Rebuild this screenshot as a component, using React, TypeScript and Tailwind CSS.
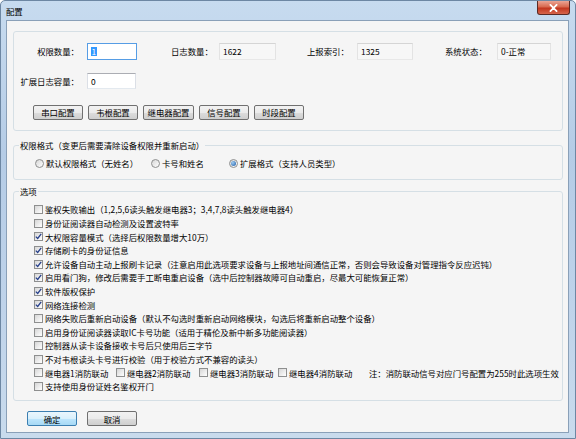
import React from "react";

const options: [string, boolean][] = [
  ["鉴权失败输出（1,2,5,6读头触发继电器3；3,4,7,8读头触发继电器4）", false],
  ["身份证阅读器自动检测及设置波特率", false],
  ["大权限容量模式（选择后权限数量增大10万）", true],
  ["存储刷卡的身份证信息", true],
  ["允许设备自动主动上报刷卡记录（注意启用此选项要求设备与上报地址间通信正常，否则会导致设备对管理指令反应迟钝）", true],
  ["启用看门狗，修改后需要手工断电重启设备（选中后控制器故障可自动重启，尽最大可能恢复正常）", true],
  ["软件版权保护", true],
  ["网络连接检测", true],
  ["网络失败后重新启动设备（默认不勾选时重新启动网络模块，勾选后将重新启动整个设备）", false],
  ["启用身份证阅读器读取IC卡号功能（适用于精伦及新中新多功能阅读器）", false],
  ["控制器从读卡设备接收卡号后只使用后三字节", false],
  ["不对韦根读头卡号进行校验（用于校验方式不兼容的读头）", false],
];

function Check({ on }: { on?: boolean }) {
  return (
    <span className="flex h-[9px] w-[9px] shrink-0 items-center justify-center border border-[#8e8f8f] bg-[linear-gradient(135deg,#d6d6d6,#ffffff)]">
      {on && (
        <svg viewBox="0 0 7 7" className="h-[7px] w-[7px]">
          <path d="M0.8 3.6 L2.7 5.5 L6.2 0.9" fill="none" stroke="#27408b" strokeWidth="1.3" />
        </svg>
      )}
    </span>
  );
}

function Radio({ on }: { on?: boolean }) {
  return (
    <span className="flex h-[9px] w-[9px] shrink-0 items-center justify-center rounded-full border border-[#8e8f8f] bg-[linear-gradient(135deg,#d6d6d6,#ffffff)]">
      {on && <span className="h-[5px] w-[5px] rounded-full bg-[radial-gradient(circle_at_35%_35%,#9ccbf2,#1d5aa5)]" />}
    </span>
  );
}

function Btn({ label, w, focus }: { label: string; w: string; focus?: boolean }) {
  return (
    <div
      className={
        focus
          ? `flex h-[15px] ${w} items-center justify-center rounded-[2px] border border-[#3c7fb1] bg-[linear-gradient(180deg,#eaf6fd_0%,#d9f0fc_50%,#bee6fd_50%,#a7d9f5_100%)] leading-none`
          : `flex h-[15px] ${w} items-center justify-center rounded-[2px] border border-[#707070] bg-[linear-gradient(180deg,#f2f2f2_0%,#ebebeb_50%,#dddddd_50%,#cfcfcf_100%)] leading-none`
      }
    >
      {label}
    </div>
  );
}

function Field({ w, h, children, focus, ro }: { w: string; h: string; children: React.ReactNode; focus?: boolean; ro?: boolean }) {
  let cls = "border-t-[#abadb3] border-x-[#dbdfe6] border-b-[#e3e9ef] bg-white";
  if (focus) cls = "border-[#569de5] bg-white";
  if (ro) cls = "border-t-[#d5d5d5] border-x-[#e3e3e3] border-b-[#e8e8e8] bg-[#f7f7f7]";
  return (
    <div className={`flex ${w} ${h} items-center border pl-[3px] leading-none ${cls}`}>{children}</div>
  );
}

export default function App() {
  return (
    <div className="flex h-[439px] w-[576px] flex-col overflow-hidden rounded-t-[5px] border border-[#6d87a3] bg-[linear-gradient(180deg,#c7dbef_0%,#b5cce6_35%,#bfd3ea_70%,#c9dbed_100%)] font-['Noto_Sans_CJK_SC',sans-serif] text-[8.4px] text-black">
      {/* title bar */}
      <div className="flex h-[19px] items-start justify-between">
        <div className="pl-[5px] pt-[4px] leading-[12px]">配置</div>
        <div className="mr-[5px] flex h-[14px] w-[33px] items-center justify-center rounded-b-[3px] border border-t-0 border-[#5b2a25] bg-[linear-gradient(180deg,#eba595_0%,#d8694f_45%,#c2361f_55%,#d6664c_100%)]">
          <svg viewBox="0 0 10 9" className="h-[8px] w-[9px]">
            <path d="M1.5 1 L8.5 8 M8.5 1 L1.5 8" stroke="#ffffff" strokeWidth="2" strokeLinecap="round" />
          </svg>
        </div>
      </div>

      {/* client area */}
      <div className="ml-[5px] mr-[6px] flex h-[413px] flex-col border border-[#8aa0b8] bg-[#f5f5f5] pl-[6px] pr-[5px] pt-[10px]">
        {/* counters */}
        <div className="h-[100px] rounded-[3px] border border-[#d5dfe5] pt-[11px]">
          <div className="flex h-[17px] items-center">
            <span className="w-[65px] text-right">权限数量：</span>
            <div className="ml-[8px]">
              <Field w="w-[50px]" h="h-[17px]" focus>
                <span className="bg-[#3399ff] px-[0.5px] text-white">1</span>
              </Field>
            </div>
            <span className="ml-[34px] w-[48px]">日志数量：</span>
            <Field w="w-[57px]" h="h-[17px]" ro>1622</Field>
            <span className="ml-[31px] w-[50px]">上报索引：</span>
            <Field w="w-[56px]" h="h-[17px]" ro>1325</Field>
            <span className="ml-[32px] w-[52px]">系统状态：</span>
            <Field w="w-[54px]" h="h-[17px]" ro>0-正常</Field>
          </div>
          <div className="mt-[13px] flex h-[16px] items-center">
            <span className="w-[65px] text-right">扩展日志容量：</span>
            <div className="ml-[8px]">
              <Field w="w-[49px]" h="h-[16px]">0</Field>
            </div>
          </div>
          <div className="ml-[19px] mt-[16px] flex gap-[5px]">
            <Btn label="串口配置" w="w-[50px]" />
            <Btn label="韦根配置" w="w-[50px]" />
            <Btn label="继电器配置" w="w-[51px]" />
            <Btn label="信号配置" w="w-[50px]" />
            <Btn label="时段配置" w="w-[50px]" />
          </div>
        </div>

        {/* permission format */}
        <fieldset className="mt-[8px] rounded-[3px] border border-[#d5dfe5] pb-[10px]">
          <legend className="ml-[5px] px-[1px] leading-[12px]">权限格式（变更后需要清除设备权限并重新启动）</legend>
          <div className="mt-[6px] flex h-[12px] items-center pl-[21px]">
            <Radio />
            <span className="ml-[2px] w-[105px]">默认权限格式（无姓名）</span>
            <Radio />
            <span className="ml-[2px] w-[67px]">卡号和姓名</span>
            <Radio on />
            <span className="ml-[2px]">扩展格式（支持人员类型）</span>
          </div>
        </fieldset>

        {/* options */}
        <fieldset className="mt-[5px] rounded-[3px] border border-[#d5dfe5] pb-[7px] pt-[6px]">
          <legend className="ml-[5px] px-[1px] leading-[12px]">选项</legend>
          {options.map(([text, on]) => (
            <div key={text} className="flex h-[13.6px] items-center whitespace-nowrap pl-[20px]">
              <Check on={on} />
              <span className="ml-[2px]">{text}</span>
            </div>
          ))}
          <div className="flex h-[13.6px] items-center whitespace-nowrap pl-[20px]">
            <div className="flex w-[82px] items-center">
              <Check />
              <span className="ml-[2px]">继电器1消防联动</span>
            </div>
            <div className="flex w-[83px] items-center">
              <Check />
              <span className="ml-[2px]">继电器2消防联动</span>
            </div>
            <div className="flex w-[79px] items-center">
              <Check />
              <span className="ml-[2px]">继电器3消防联动</span>
            </div>
            <div className="flex w-[91px] items-center">
              <Check />
              <span className="ml-[2px]">继电器4消防联动</span>
            </div>
            <span>注：消防联动信号对应门号配置为255时此选项生效</span>
          </div>
          <div className="flex h-[13.6px] items-center whitespace-nowrap pl-[20px]">
            <Check />
            <span className="ml-[2px]">支持使用身份证姓名鉴权开门</span>
          </div>
        </fieldset>

        <div className="ml-[14px] mt-[10px] flex gap-[10px]">
          <Btn label="确定" w="w-[50px]" focus />
          <Btn label="取消" w="w-[50px]" />
        </div>
      </div>
    </div>
  );
}
